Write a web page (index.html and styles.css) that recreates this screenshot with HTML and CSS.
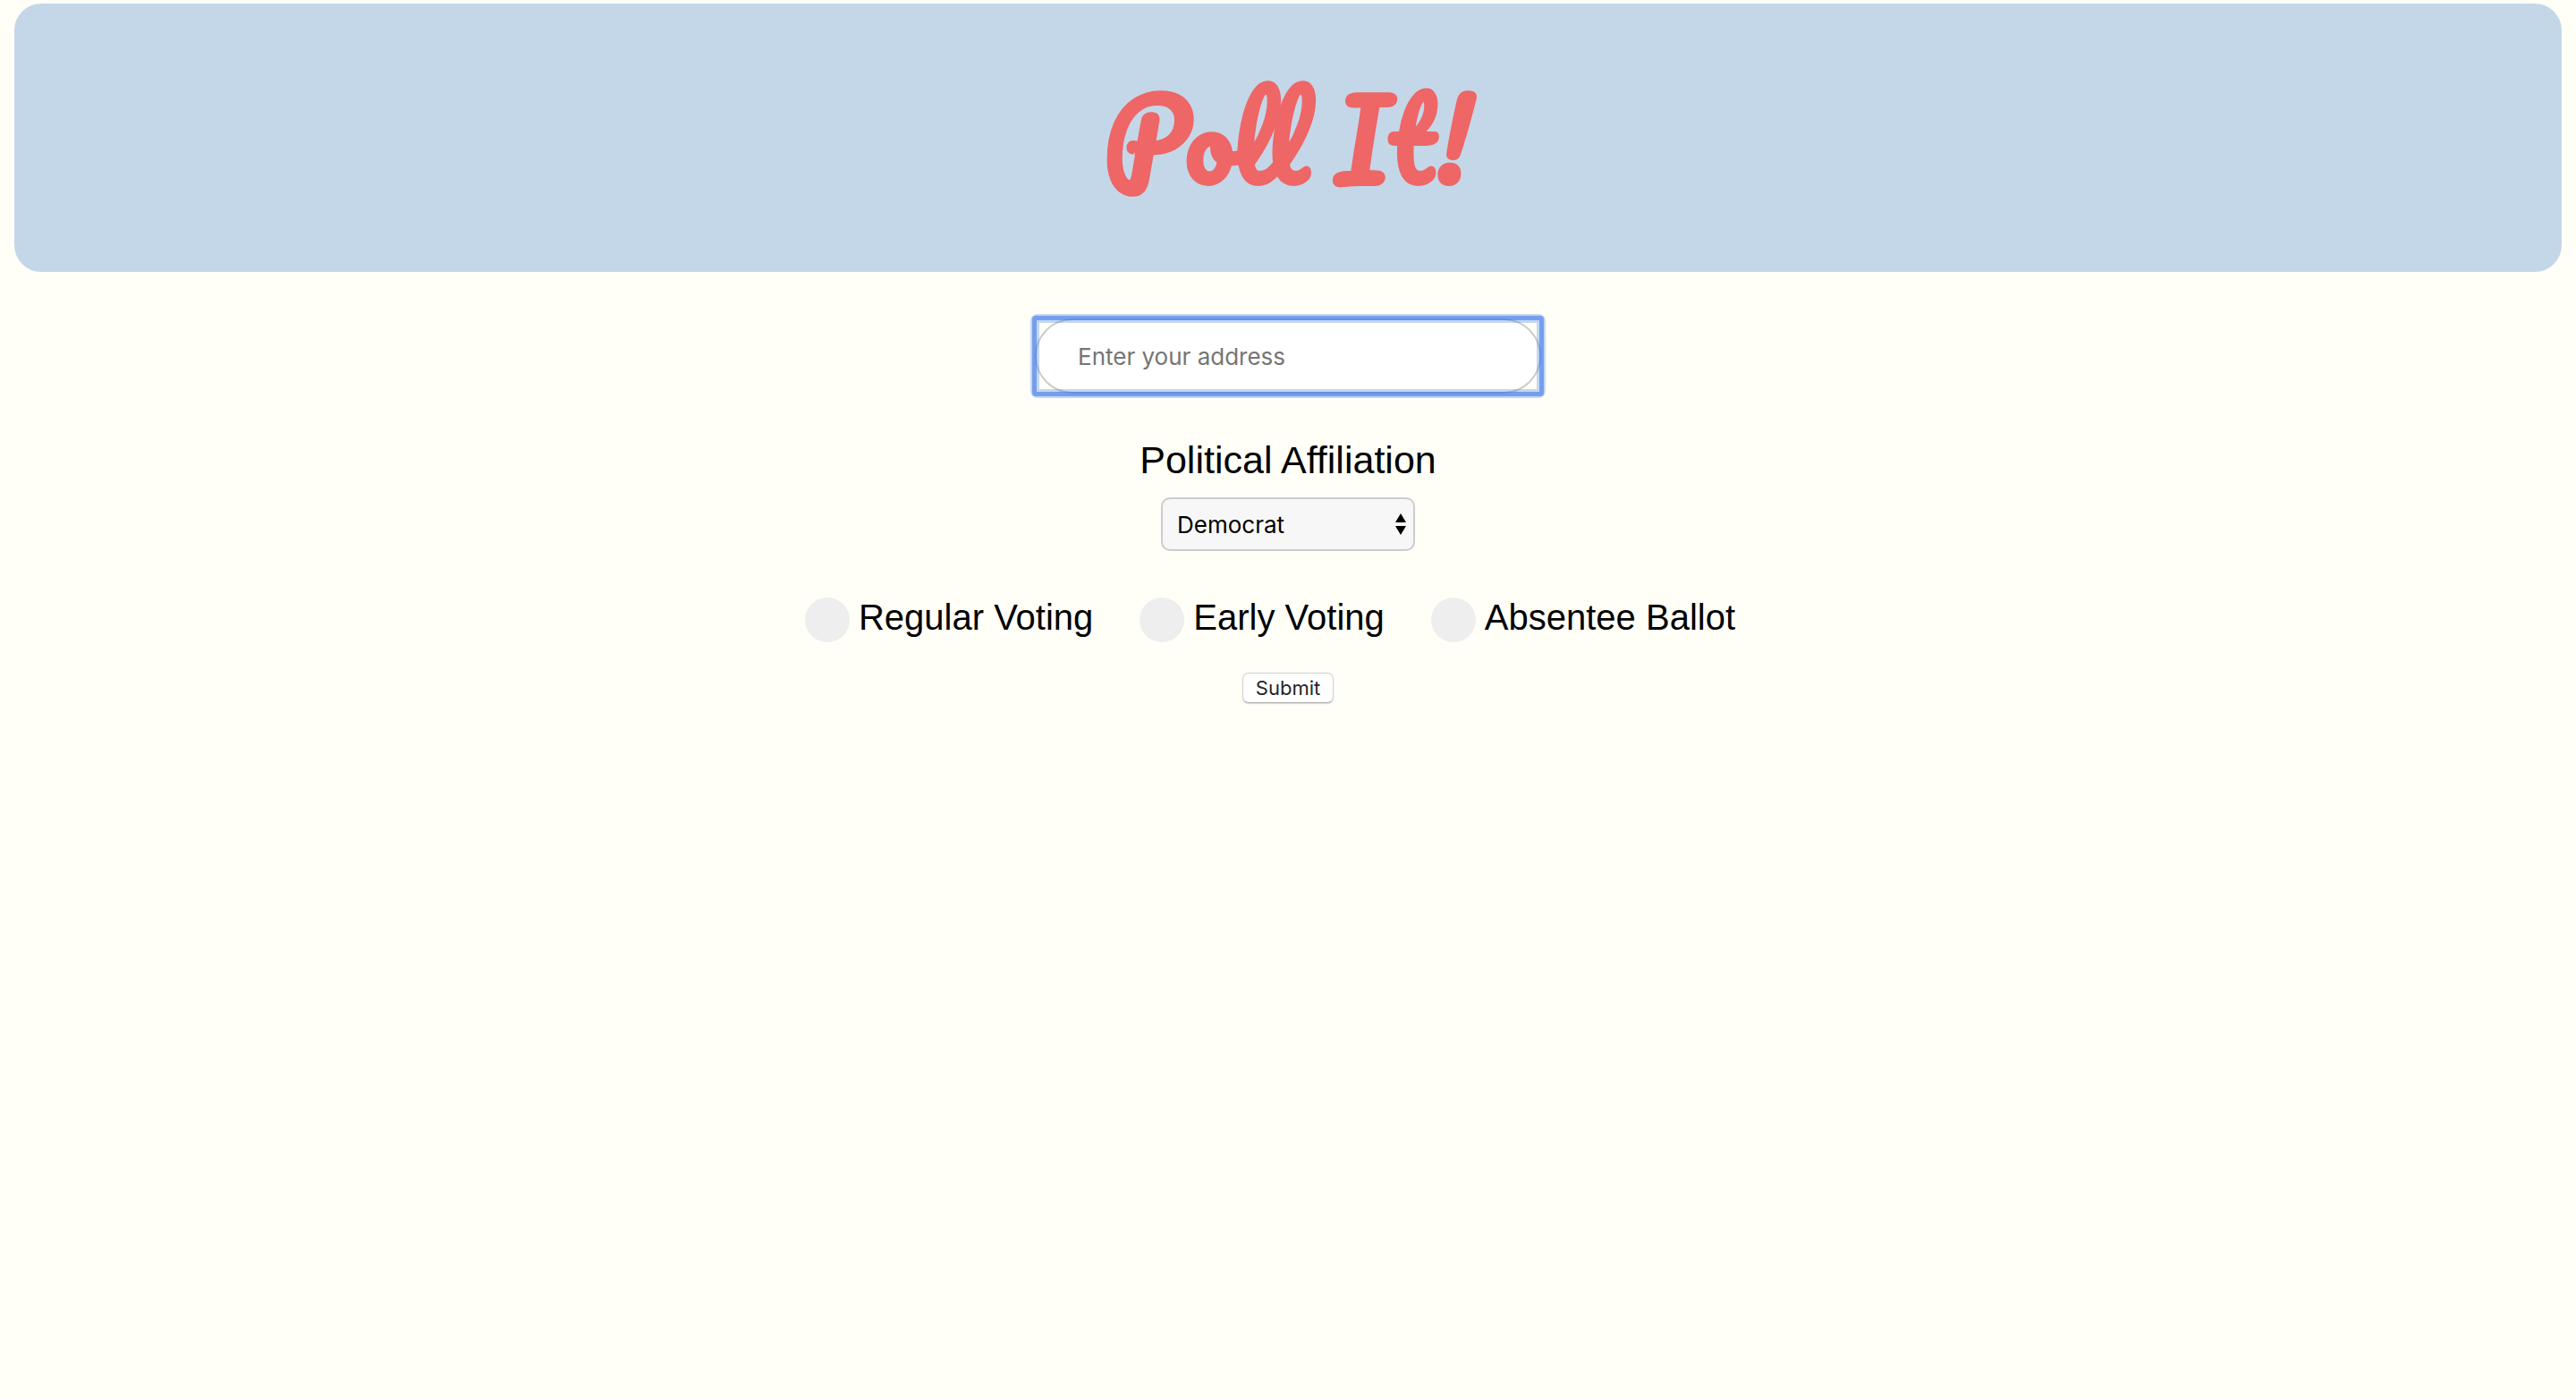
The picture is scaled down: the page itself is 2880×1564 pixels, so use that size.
FILE: index.html
```html
<!DOCTYPE html>
<html lang="en">
<head>
<meta charset="utf-8">
<meta name="viewport" content="width=device-width, initial-scale=1">
<title>Poll It!</title>
<link rel="stylesheet" href="styles.css">
</head>
<body>
<header class="banner"><h1 class="brand">Poll It!</h1></header>
<main>
<form class="poll-form">
  <div class="address">
    <input class="address-input" type="text" name="address" placeholder="Enter your address" aria-label="Address">
  </div>
  <label class="affiliation-label" for="affiliation">Political Affiliation</label>
  <div class="select-box">
    <select class="select" id="affiliation" name="affiliation">
      <option>Democrat</option>
      <option>Republican</option>
      <option>Independent</option>
    </select>
    <svg class="select-arrows" viewBox="0 0 12 24" aria-hidden="true"><path d="M6 0l6 10H0zM6 24L0 14h12z"/></svg>
  </div>
  <div class="methods">
    <label class="method"><input class="radio" type="radio" name="method" value="regular">Regular Voting</label>
    <label class="method"><input class="radio" type="radio" name="method" value="early">Early Voting</label>
    <label class="method"><input class="radio" type="radio" name="method" value="absentee">Absentee Ballot</label>
  </div>
  <button class="submit" type="submit">Submit</button>
</form>
</main>
</body>
</html>
```
FILE: styles.css
```css
* { box-sizing: border-box; }

body {
  margin: 0;
  padding: 4px 16px;
  background: #fffff8;
  color: #000;
  font-family: Helvetica, "Liberation Sans", sans-serif;
}

.banner {
  padding: 60px 0;
  border-radius: 30px;
  background: #c4d7e8;
  text-align: center;
}

.brand {
  margin: 0;
  color: #ee6666;
  font: bold 120px/180px Pacifico, cursive;
}

.poll-form {
  display: flex;
  flex-direction: column;
  align-items: center;
  padding-top: 52px;
}

.address {
  position: relative;
  width: 566px;
  max-width: 100%;
}

.address-input {
  display: block;
  width: 100%;
  height: 84px;
  padding: 0 46px;
  border: 2px solid #ccc;
  border-radius: 42px;
  outline: none;
  background: #fff;
  font: 26px Inter, sans-serif;
}

.address-input::placeholder { color: #757575; opacity: 1; }

/* two-tone focus ring over the edge of the field */
.address::before,
.address::after {
  content: "";
  position: absolute;
  pointer-events: none;
}

.address::before {
  inset: -5px;
  border: 10px solid rgba(60, 120, 225, .3);
  border-radius: 8px;
}

.address::after {
  inset: -3px;
  border: 5px solid rgba(65, 120, 235, .6);
  border-radius: 4px;
}

.affiliation-label {
  margin-top: 48px;
  font-size: 43px;
  line-height: 52px;
}

.select-box {
  position: relative;
  width: 284px;
  margin-top: 16px;
}

.select {
  appearance: none;
  display: block;
  width: 100%;
  height: 60px;
  padding: 0 40px 0 16px;
  border: 2px solid #ccc;
  border-radius: 10px;
  background: #f7f7f7;
  color: #000;
  font: 26px Inter, sans-serif;
}

.select-arrows {
  position: absolute;
  top: 18px;
  right: 10px;
  width: 12px;
  height: 24px;
  pointer-events: none;
}

.methods {
  display: flex;
  flex-wrap: wrap;
  gap: 12px;
  margin-top: 50px;
}

.method {
  display: flex;
  align-items: flex-start;
  gap: 10px;
  margin-right: 40px;
  font-size: 40px;
  line-height: 48px;
}

.radio {
  appearance: none;
  width: 50px;
  height: 50px;
  margin: 2px 0 0;
  border-radius: 50%;
  background: #eee;
}

.radio:checked { background: #ee6666; }

.submit {
  height: 34px;
  margin-top: 34px;
  padding: 0 14px;
  border: 1px solid #d0d0cc;
  border-bottom-color: #b0b0ac;
  border-radius: 7px;
  background: #fff;
  box-shadow: 0 1px 1px rgba(0, 0, 0, .15);
  color: #262626;
  font: 22px/30px Inter, sans-serif;
}
```
